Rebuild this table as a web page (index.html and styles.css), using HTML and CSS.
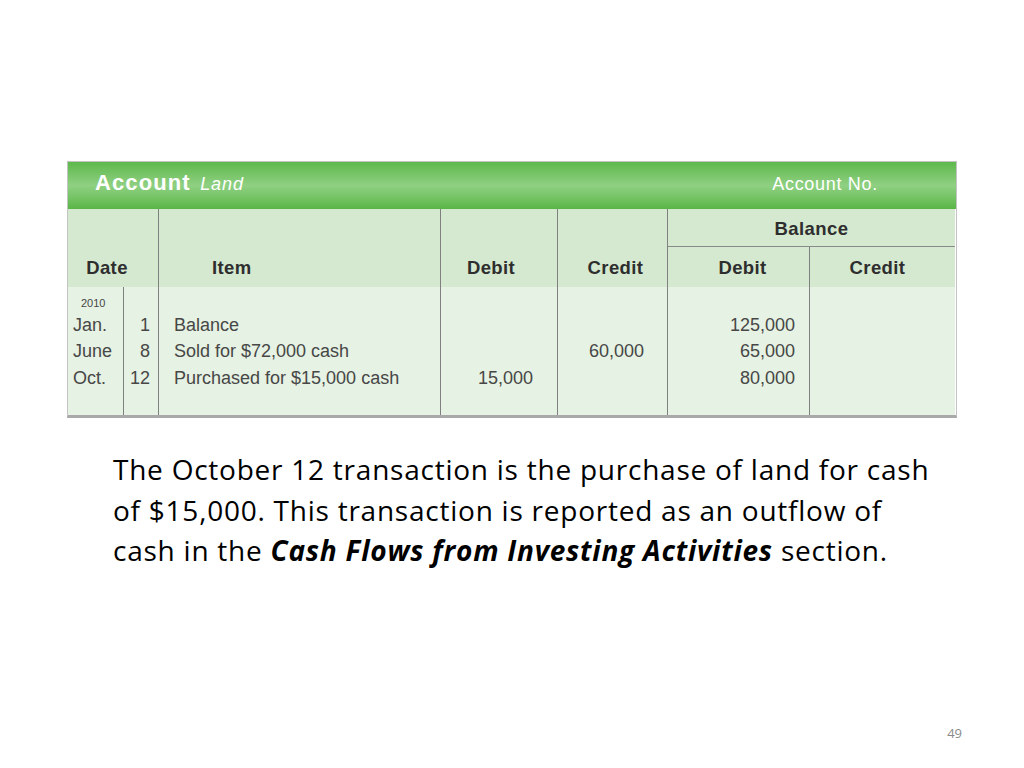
FILE: index.html
```html
<!DOCTYPE html>
<html>
<head>
<meta charset="utf-8">
<link rel="stylesheet" href="styles.css">
</head>
<body>
<div class="slide">
  <div class="ledger">
    <div class="title-bar">
      <div class="title"><span class="acc">Account</span> <span class="land">Land</span></div>
      <div class="acc-no">Account No.</div>
    </div>
    <div class="grid">
      <div class="hd hd-date">Date</div>
      <div class="hd hd-item vline">Item</div>
      <div class="hd hd-debit vline">Debit</div>
      <div class="hd hd-credit vline">Credit</div>
      <div class="hd hd-balance vline">Balance</div>
      <div class="hd hd-bdebit vline">Debit</div>
      <div class="hd hd-bcredit vline">Credit</div>

      <div class="bd bd-month">
        <div class="year">2010</div>
        <div class="ln">Jan.</div>
        <div class="ln">June</div>
        <div class="ln">Oct.</div>
      </div>
      <div class="bd bd-day vline">
        <div class="ln">1</div>
        <div class="ln">8</div>
        <div class="ln">12</div>
      </div>
      <div class="bd bd-item vline">
        <div class="ln">Balance</div>
        <div class="ln">Sold for $72,000 cash</div>
        <div class="ln">Purchased for $15,000 cash</div>
      </div>
      <div class="bd bd-num bd-debit vline">
        <div class="ln">&nbsp;</div>
        <div class="ln">&nbsp;</div>
        <div class="ln">15,000</div>
      </div>
      <div class="bd bd-num bd-credit vline">
        <div class="ln">&nbsp;</div>
        <div class="ln">60,000</div>
        <div class="ln">&nbsp;</div>
      </div>
      <div class="bd bd-num bd-bdebit vline">
        <div class="ln">125,000</div>
        <div class="ln">65,000</div>
        <div class="ln">80,000</div>
      </div>
      <div class="bd bd-bcredit vline"></div>
    </div>
  </div>

  <p class="text">The October 12 transaction is the purchase of land for cash<br>of $15,000. This transaction is reported as an outflow of<br>cash in the <b><i>Cash Flows from Investing Activities</i></b> section.</p>

  <div class="footer"><span class="page-no">49</span></div>
</div>
</body>
</html>
```

FILE: styles.css
```css
html, body {
  margin: 0;
  padding: 0;
  background: #ffffff;
}

.slide {
  width: 1024px;
  height: 768px;
  display: flex;
  flex-direction: column;
  box-sizing: border-box;
  padding-top: 161px;
}

.ledger {
  margin-left: 67px;
  width: 888px;
  border: 1px solid #c4c4c4;
  border-bottom: 3px solid #a9a9a9;
  font-family: "Liberation Sans", Arial, sans-serif;
}

.title-bar {
  height: 47px;
  display: flex;
  align-items: center;
  justify-content: space-between;
  background: linear-gradient(#5db94b 0%, #7cc66c 30%, #8fd082 50%, #76c466 75%, #59b546 100%);
  color: #ffffff;
  padding: 0 78px 0 27px;
}

.title {
  margin-top: -5px;
}

.acc {
  font-weight: bold;
  font-size: 22px;
  letter-spacing: 1.1px;
}

.land {
  font-style: italic;
  font-size: 18px;
  letter-spacing: 0.9px;
  margin-left: 5px;
}

.acc-no {
  font-size: 18px;
  letter-spacing: 0.7px;
  margin-top: -3px;
}

.grid {
  display: grid;
  grid-template-columns: 55px 35px 282px 117px 110px 142px 146px;
  grid-template-rows: 38px 40px 128px;
}

.vline {
  border-left: 1px solid #808080;
}

.hd {
  background: #d5e9d0;
  color: #2e2e2e;
  font-weight: bold;
  font-size: 18.5px;
  letter-spacing: 0.4px;
  display: flex;
  justify-content: center;
}

.hd-date,
.hd-item,
.hd-debit,
.hd-credit {
  grid-row: 1 / 3;
  align-items: flex-end;
  line-height: 38px;
}

.hd-date {
  grid-column: 1 / 3;
  padding-right: 12px;
}

.hd-item {
  grid-column: 3;
  justify-content: flex-start;
  padding-left: 53px;
}

.hd-debit {
  grid-column: 4;
  padding-right: 16px;
}

.hd-credit {
  grid-column: 5;
  padding-left: 6px;
}

.hd-balance {
  grid-column: 6 / 8;
  grid-row: 1;
  align-items: center;
  line-height: 22px;
  padding-top: 3px;
  border-bottom: 1px solid #8a8a8a;
}

.hd-bdebit,
.hd-bcredit {
  grid-row: 2;
  align-items: center;
  line-height: 22px;
  padding-top: 2px;
}

.hd-bdebit {
  grid-column: 6;
  padding-left: 8px;
}

.hd-bcredit {
  grid-column: 7;
  padding-right: 10px;
}

.bd {
  grid-row: 3;
  background: #e6f2e3;
  color: #474747;
  font-size: 18px;
  padding-top: 24.5px;
}

.bd .ln {
  height: 26.5px;
  line-height: 26.5px;
  white-space: nowrap;
}

.bd-month {
  grid-column: 1;
  padding-top: 7.5px;
  padding-left: 5px;
}

.year {
  height: 17px;
  line-height: 17px;
  font-size: 11px;
  padding-left: 8px;
}

.bd-day {
  grid-column: 2;
  text-align: right;
  padding-right: 8px;
}

.bd-item {
  grid-column: 3;
  padding-left: 15px;
}

.bd-num {
  text-align: right;
}

.bd-debit {
  grid-column: 4;
  padding-right: 24px;
}

.bd-credit {
  grid-column: 5;
  padding-right: 23px;
}

.bd-bdebit {
  grid-column: 6;
  padding-right: 14px;
}

.bd-bcredit {
  grid-column: 7;
}

.text {
  margin: 31px 0 0 113px;
  width: 900px;
  font-family: "Open Sans", "Liberation Sans", sans-serif;
  font-size: 28px;
  letter-spacing: 0.76px;
  line-height: 40.5px;
  color: #000000;
  white-space: nowrap;
}

.footer {
  margin-top: auto;
  display: flex;
  justify-content: flex-end;
  padding: 0 62px 27px 0;
}

.page-no {
  font-family: "Open Sans", "Liberation Sans", sans-serif;
  font-size: 13px;
  line-height: 16px;
  color: #8a8a8a;
}
```
